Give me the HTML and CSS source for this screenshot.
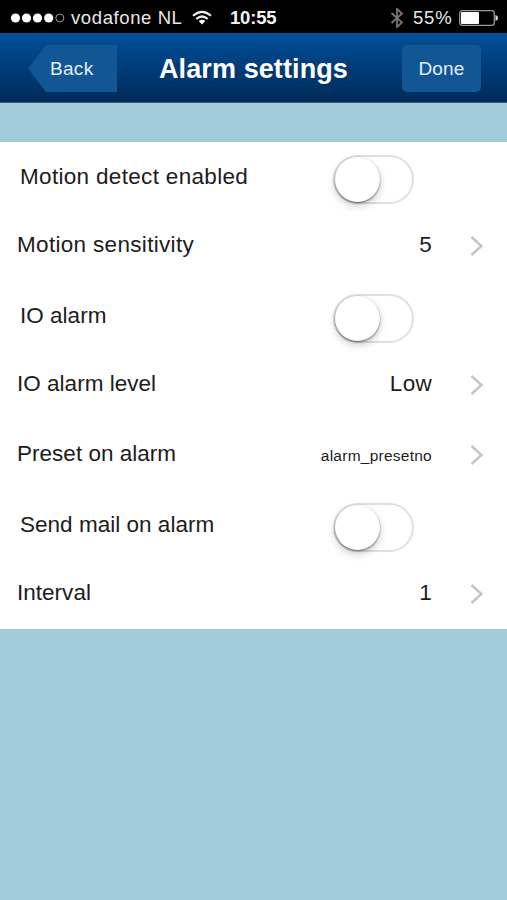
FILE: index.html
```html
<!DOCTYPE html>
<html lang="en">
<head>
<meta charset="utf-8">
<title>Alarm settings</title>
<link rel="stylesheet" href="styles.css">
</head>
<body>
<div class="status">
  <svg class="signal" width="56" height="12" viewBox="0 0 56 12"><g fill="#fff"><circle cx="5.5" cy="6" r="4.6"/><circle cx="16.5" cy="6" r="4.6"/><circle cx="27.5" cy="6" r="4.6"/><circle cx="38.7" cy="6" r="4.6"/></g><circle cx="49.8" cy="6" r="4" fill="none" stroke="#999" stroke-width="1"/></svg>
  <span class="carrier">vodafone NL</span>
  <svg class="wifi" width="20" height="16" viewBox="0 0 20 16"><g fill="none" stroke="#eee" stroke-width="2.2"><path d="M1 5.8Q10-2.2 19 5.8"/><path d="M4.3 9Q10 4 15.7 9"/></g><path d="M6.7 11Q10 8.3 13.3 11L10 14.6Z" fill="#fff"/></svg>
  <span class="clock">10:55</span>
  <svg class="bluetooth" width="14" height="20" viewBox="0 0 14 20"><path d="M1.5 5L12 14.5L7 19V1L12 5.5L1.5 15" fill="none" stroke="#777" stroke-width="1.8"/></svg>
  <span class="percent">55%</span>
  <svg class="battery" width="40" height="16" viewBox="0 0 40 16"><rect x=".7" y=".7" width="34.6" height="14.6" rx="2.5" fill="#000" stroke="#999" stroke-width="1.3"/><rect x="2" y="2" width="18" height="12" rx="1" fill="#fff"/><path d="M36.5 5Q39 5.5 39 8T36.5 11Z" fill="#ddd"/></svg>
</div>
<header class="navbar">
  <div class="back"><span>Back</span></div>
  <h1>Alarm settings</h1>
  <div class="done">Done</div>
</header>
<main class="list">
  <div class="row toggle"><span class="label wide">Motion detect enabled</span><div class="switch"><i></i></div></div>
  <div class="row"><span class="label wide">Motion sensitivity</span><span class="value">5</span><svg class="chevron" width="14" height="20" viewBox="0 0 14 20"><path d="M1.5 1L11.5 10L1.5 19"/></svg></div>
  <div class="row toggle"><span class="label">IO alarm</span><div class="switch"><i></i></div></div>
  <div class="row"><span class="label">IO alarm level</span><span class="value">Low</span><svg class="chevron" width="14" height="20" viewBox="0 0 14 20"><path d="M1.5 1L11.5 10L1.5 19"/></svg></div>
  <div class="row"><span class="label">Preset on alarm</span><span class="value small">alarm_presetno</span><svg class="chevron" width="14" height="20" viewBox="0 0 14 20"><path d="M1.5 1L11.5 10L1.5 19"/></svg></div>
  <div class="row toggle"><span class="label">Send mail on alarm</span><div class="switch"><i></i></div></div>
  <div class="row"><span class="label">Interval</span><span class="value">1</span><svg class="chevron" width="14" height="20" viewBox="0 0 14 20"><path d="M1.5 1L11.5 10L1.5 19"/></svg></div>
</main>
</body>
</html>
```
FILE: styles.css
```css
* { box-sizing: border-box; }
body { margin: 0; height: 900px; overflow: hidden; background: #a1cbd8; font-family: "Liberation Sans", Arial, sans-serif; color: #1c1c1c; }
svg { display: block; flex: none; }
.status { height: 33px; background: #000; color: #e8e8e8; display: flex; align-items: center; padding: 3px 8px 0 10px; font-size: 18.5px; line-height: 30px; white-space: nowrap; }
.carrier { width: 122px; padding-left: 5px; letter-spacing: .6px; }
.wifi { margin-left: 4px; }
.clock { margin-left: 18px; width: 160px; font-weight: bold; font-size: 18.5px; color: #f4f4f4; letter-spacing: -.2px; }
.bluetooth { margin-left: 0; }
.percent { margin-left: 9px; width: 46px; letter-spacing: .8px; }
.battery { margin-left: 0; }
.navbar { height: 70px; background: linear-gradient(#00529b, #003c78 50%, #002b56); border-bottom: 1px solid #37597b; display: flex; align-items: center; padding: 2px 26px 0 28px; color: #fff; }
.back { width: 89px; height: 47px; background: #125696; clip-path: polygon(0 50%, 18px 0, 100% 0, 100% 100%, 18px 100%); line-height: 47px; padding-left: 22px; font-size: 19px; color: #e3eefa; letter-spacing: .3px; }
h1 { margin: 0; width: 285px; padding-left: 42px; font-size: 27px; line-height: 46px; letter-spacing: .1px; white-space: nowrap; }
.done { width: 79px; height: 47px; border-radius: 5px; background: #125696; text-align: center; line-height: 47px; font-size: 19px; color: #e3eefa; letter-spacing: .2px; }
.list { margin-top: 39px; height: 487px; background: #fff; display: grid; grid-template-rows: repeat(7, 1fr); }
.row { display: flex; align-items: center; padding: 0 23px 0 17px; font-size: 22.5px; letter-spacing: .3px; white-space: nowrap; }
.label { flex: 1; padding-bottom: 2px; letter-spacing: .02px; }
.wide { letter-spacing: .32px; }
.value { width: 130px; text-align: right; padding-bottom: 2px; }
.small { font-size: 15.5px; letter-spacing: .25px; padding: 1px 0 0; }
.chevron { margin-left: 38px; }
.chevron path { fill: none; stroke: #c4c4c4; stroke-width: 2.4; }
.toggle { padding: 0 93px 0 20px; }
.toggle .label { padding-bottom: 0; }
.switch { width: 81px; height: 49px; margin-top: 6px; border: 2px solid #e0e0e0; border-radius: 25px; }
.switch i { display: block; width: 45px; height: 45px; border-radius: 50%; background: #fff; box-shadow: 0 1px 2px rgba(0,0,0,.5), 0 4px 9px rgba(0,0,0,.2); }
```
